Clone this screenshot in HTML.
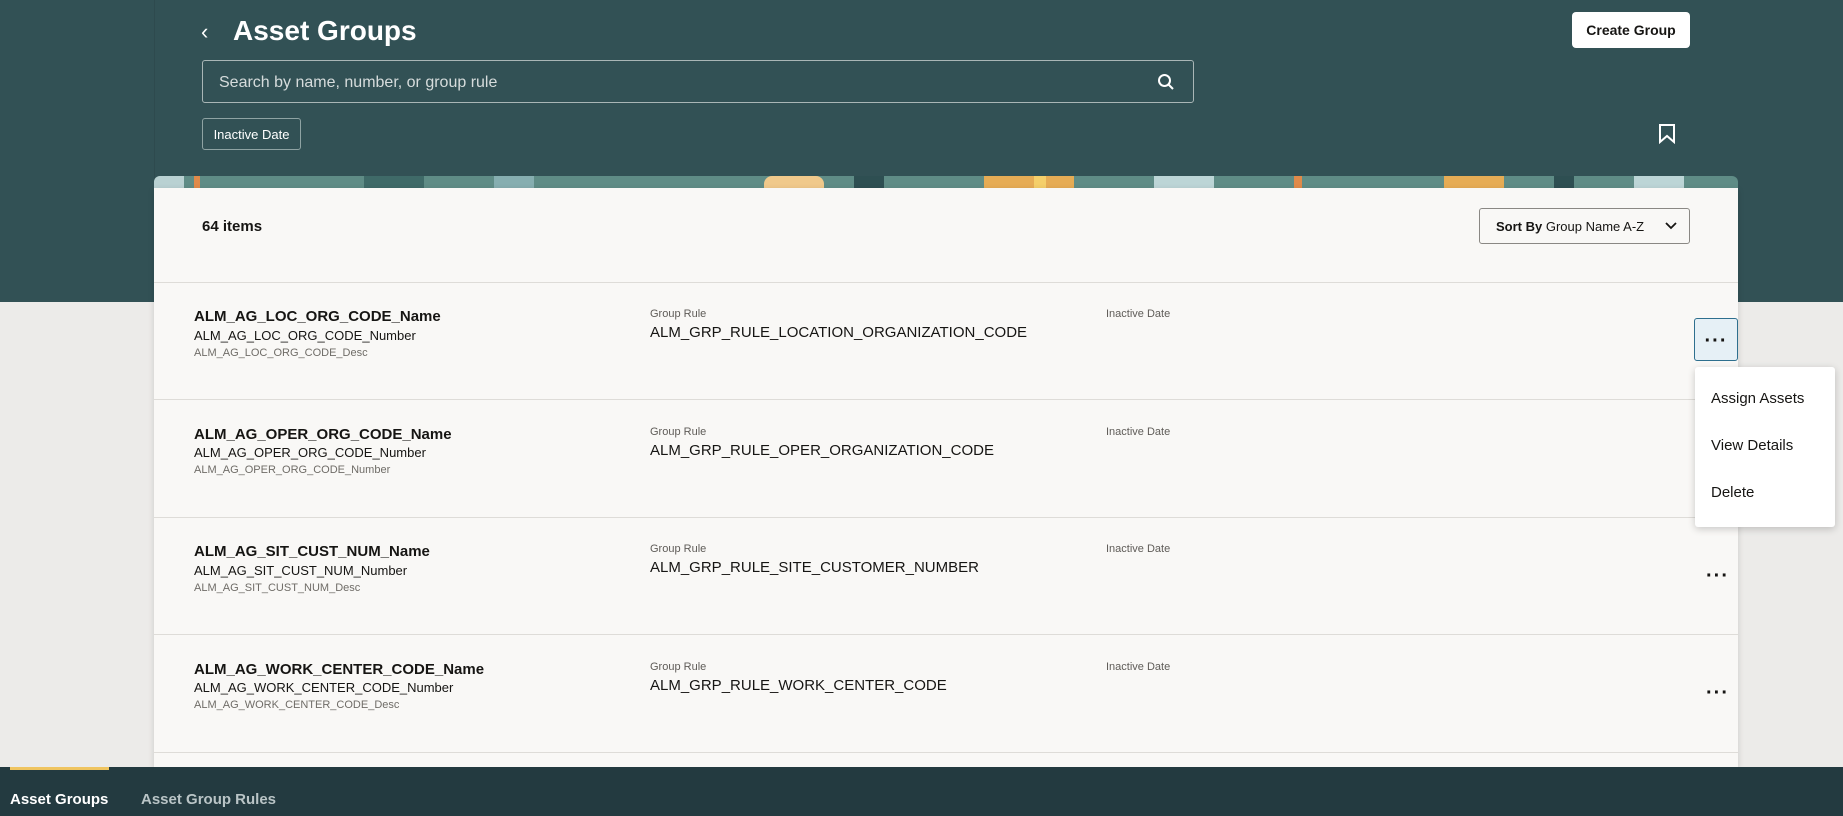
<!DOCTYPE html>
<html><head><meta charset="utf-8"><style>
*{box-sizing:border-box;margin:0;padding:0}
body{width:1843px;height:816px;overflow:hidden;position:relative;font-family:"Liberation Sans",sans-serif;background:#ecebe9;color:#161513}
.abs{position:absolute}
.hdr{left:0;top:0;width:1843px;height:302px;background:#325155}
.col{left:154px;top:0;width:1584px;height:188px;background:#325155;border-left:1px solid #2e4a4e}
.strip{left:154px;top:176px;width:1584px;height:14px;border-radius:6px 6px 0 0;overflow:hidden;background:#5f8c86}
.strip i{position:absolute;top:0;height:14px;display:block}
.card{left:154px;top:188px;width:1584px;height:579px;background:#f9f8f6;box-shadow:0 2px 6px rgba(0,0,0,.15)}
.hr{position:absolute;left:0;width:1584px;height:1px;background:#dedcd8}
.name{font-size:15px;font-weight:bold;position:absolute;left:40px}
.num{font-size:13px;position:absolute;left:40px}
.desc{font-size:11px;color:#6f6c67;position:absolute;left:40px}
.lbl{font-size:11px;color:#5f5c58;position:absolute}
.val{font-size:15px;position:absolute;left:496px}
.dots{position:absolute;left:1552px;font-size:20px;font-weight:bold;letter-spacing:1px}
.nav{left:0;top:767px;width:1843px;height:49px;background:#233a40}
</style></head><body>
<div class="abs hdr"></div>
<div class="abs col"></div>
<div class="abs" style="left:201px;top:19px;color:#fff;font-size:22px">&#8249;</div>
<div class="abs" style="left:233px;top:15px;color:#fff;font-size:28px;font-weight:bold">Asset Groups</div>
<div class="abs" style="left:1572px;top:12px;width:118px;height:36px;background:#fff;border-radius:4px;font-size:14px;font-weight:bold;text-align:center;line-height:36px">Create Group</div>
<div class="abs" style="left:202px;top:60px;width:992px;height:43px;border:1px solid #a9b6b6;border-radius:3px;color:#d6dcdc;font-size:16px;line-height:43px;padding-left:16px">Search by name, number, or group rule</div>
<svg class="abs" style="left:1157px;top:73px" width="18" height="18" viewBox="0 0 18 18"><circle cx="7.5" cy="7.5" r="5.5" fill="none" stroke="#fff" stroke-width="2"/><path d="M11.5 11.5L16 16" stroke="#fff" stroke-width="2"/></svg>
<div class="abs" style="left:202px;top:118px;width:99px;height:32px;border:1px solid #8fa3a3;border-radius:3px;color:#fff;font-size:13px;line-height:32px;text-align:center">Inactive Date</div>
<svg class="abs" style="left:1658px;top:124px" width="18" height="20" viewBox="0 0 18 20"><path d="M2 1H16V18L9 12L2 18Z" fill="none" stroke="#fff" stroke-width="2"/></svg>
<div class="abs strip">
<i style="left:0;width:30px;background:#b9d1d2"></i><i style="left:40px;width:6px;background:#e08a4a"></i><i style="left:210px;width:60px;background:#3f6a68"></i><i style="left:340px;width:40px;background:#86aeb0"></i><i style="left:610px;width:60px;background:#f0c98b;border-radius:8px 8px 0 0"></i><i style="left:700px;width:30px;background:#2e4f52"></i><i style="left:830px;width:90px;background:#e6ac55"></i><i style="left:880px;width:12px;background:#f5cf6a"></i><i style="left:1000px;width:60px;background:#bcd5d6"></i><i style="left:1140px;width:8px;background:#e08a4a"></i><i style="left:1290px;width:60px;background:#e6ac55"></i><i style="left:1400px;width:20px;background:#2e4f52"></i><i style="left:1480px;width:50px;background:#bcd5d6"></i>
</div>
<div class="abs card">
<div class="abs" style="left:48px;top:30px;font-size:15px;font-weight:bold">64 items</div>
<div class="abs" style="left:1325px;top:20px;width:211px;height:36px;border:1px solid #8a8884;border-radius:3px;font-size:13px;line-height:36px;padding-left:16px"><b>Sort By</b> Group Name A-Z</div>
<svg class="abs" style="left:1511px;top:34px" width="12" height="8" viewBox="0 0 12 8"><path d="M1 1L6 6L11 1" fill="none" stroke="#161513" stroke-width="1.8"/></svg>
<div class="hr" style="top:94px"></div>
<div class="hr" style="top:211px"></div>
<div class="hr" style="top:329px"></div>
<div class="hr" style="top:446px"></div>
<div class="hr" style="top:564px"></div>

<div class="name" style="top:120px">ALM_AG_LOC_ORG_CODE_Name</div>
<div class="num" style="top:140px">ALM_AG_LOC_ORG_CODE_Number</div>
<div class="desc" style="top:159px">ALM_AG_LOC_ORG_CODE_Desc</div>
<div class="lbl" style="left:496px;top:120px">Group Rule</div>
<div class="val" style="top:136px">ALM_GRP_RULE_LOCATION_ORGANIZATION_CODE</div>
<div class="lbl" style="left:952px;top:120px">Inactive Date</div>

<div class="name" style="top:238px">ALM_AG_OPER_ORG_CODE_Name</div>
<div class="num" style="top:257px">ALM_AG_OPER_ORG_CODE_Number</div>
<div class="desc" style="top:276px">ALM_AG_OPER_ORG_CODE_Number</div>
<div class="lbl" style="left:496px;top:238px">Group Rule</div>
<div class="val" style="top:254px">ALM_GRP_RULE_OPER_ORGANIZATION_CODE</div>
<div class="lbl" style="left:952px;top:238px">Inactive Date</div>

<div class="name" style="top:355px">ALM_AG_SIT_CUST_NUM_Name</div>
<div class="num" style="top:375px">ALM_AG_SIT_CUST_NUM_Number</div>
<div class="desc" style="top:394px">ALM_AG_SIT_CUST_NUM_Desc</div>
<div class="lbl" style="left:496px;top:355px">Group Rule</div>
<div class="val" style="top:371px">ALM_GRP_RULE_SITE_CUSTOMER_NUMBER</div>
<div class="lbl" style="left:952px;top:355px">Inactive Date</div>
<div class="dots" style="top:377px">&middot;&middot;&middot;</div>

<div class="name" style="top:473px">ALM_AG_WORK_CENTER_CODE_Name</div>
<div class="num" style="top:492px">ALM_AG_WORK_CENTER_CODE_Number</div>
<div class="desc" style="top:511px">ALM_AG_WORK_CENTER_CODE_Desc</div>
<div class="lbl" style="left:496px;top:473px">Group Rule</div>
<div class="val" style="top:489px">ALM_GRP_RULE_WORK_CENTER_CODE</div>
<div class="lbl" style="left:952px;top:473px">Inactive Date</div>
<div class="dots" style="top:494px">&middot;&middot;&middot;</div>
</div>
<div class="abs" style="left:1694px;top:318px;width:44px;height:43px;background:#e6f0f6;border:1px solid #2e6f8e;border-radius:3px;text-align:center;font-size:20px;font-weight:bold;line-height:44px;letter-spacing:1px">&middot;&middot;&middot;</div>
<div class="abs" style="left:1695px;top:367px;width:140px;height:160px;background:#fff;border-radius:3px;box-shadow:0 2px 8px rgba(0,0,0,.2);font-size:15px">
<div class="abs" style="left:16px;top:23px">Assign Assets</div>
<div class="abs" style="left:16px;top:70px">View Details</div>
<div class="abs" style="left:16px;top:117px">Delete</div>
</div>
<div class="abs nav"></div>
<div class="abs" style="left:10px;top:767px;width:99px;height:3px;background:#efc460"></div>
<div class="abs" style="left:10px;top:791px;color:#fff;font-size:15px;font-weight:bold">Asset Groups</div>
<div class="abs" style="left:141px;top:791px;color:#b9c4c6;font-size:15px;font-weight:bold">Asset Group Rules</div>
</body></html>
